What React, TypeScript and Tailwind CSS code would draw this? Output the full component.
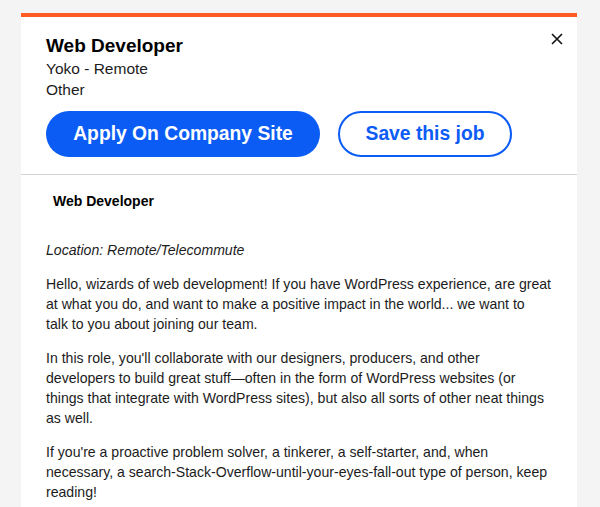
import { useState } from 'react';

export default function App() {
    const [saved, setSaved] = useState(false);

    return (
        <div className="min-h-[507px] bg-[#f4f4f4] pt-[13px] pl-[21px] pr-[23px] font-['Liberation_Sans',Arial,sans-serif] text-[#1c1c1c]">
            <div className="bg-white border-t-4 border-[#ff5a1f]">
                <div className="relative px-[25px] pt-[17px] pb-[17px] border-b border-[#d2d2d2]">
                    <button className="absolute right-[14px] top-[16px] w-[12px] h-[12px]" aria-label="Close">
                        <svg viewBox="0 0 12 12" className="w-[12px] h-[12px]" fill="none" stroke="#111" strokeWidth="1.6">
                            <path d="M1 1L11 11M11 1L1 11" />
                        </svg>
                    </button>
                    <h1 className="text-[19px] leading-[24px] font-bold text-black">Web Developer</h1>
                    <div className="text-[15.5px] leading-[21px]">Yoko - Remote</div>
                    <div className="text-[15.5px] leading-[21px]">Other</div>
                    <div className="flex gap-[18px] mt-[11px]">
                        <button className="h-[46px] w-[274px] rounded-full bg-[#0b5cf5] text-white text-[19.3px] font-bold">
                            Apply On Company Site
                        </button>
                        <button
                            onClick={() => setSaved(!saved)}
                            className="h-[46px] w-[174px] rounded-full border-2 border-[#0b5cf5] text-[#0b5cf5] text-[19.3px] font-bold"
                        >
                            {saved ? 'Saved' : 'Save this job'}
                        </button>
                    </div>
                </div>
                {/* line breaks follow the original layout */}
                <div className="pl-[25px] pr-[10px] pt-[16px] pb-[10px] text-[14.1px] leading-[20px] whitespace-nowrap">
                    <h2 className="ml-[7px] text-[14px] font-bold text-black">Web Developer</h2>
                    <p className="mt-[29px] italic">Location: Remote/Telecommute</p>
                    <p className="mt-[14px]">
                        Hello, wizards of web development! If you have WordPress experience, are great<br />
                        at what you do, and want to make a positive impact in the world... we want to<br />
                        talk to you about joining our team.
                    </p>
                    <p className="mt-[14px]">
                        In this role, you'll collaborate with our designers, producers, and other<br />
                        developers to build great stuff—often in the form of WordPress websites (or<br />
                        things that integrate with WordPress sites), but also all sorts of other neat things<br />
                        as well.
                    </p>
                    <p className="mt-[14px]">
                        If you're a proactive problem solver, a tinkerer, a self-starter, and, when<br />
                        necessary, a search-Stack-Overflow-until-your-eyes-fall-out type of person, keep<br />
                        reading!
                    </p>
                </div>
            </div>
        </div>
    );
}
